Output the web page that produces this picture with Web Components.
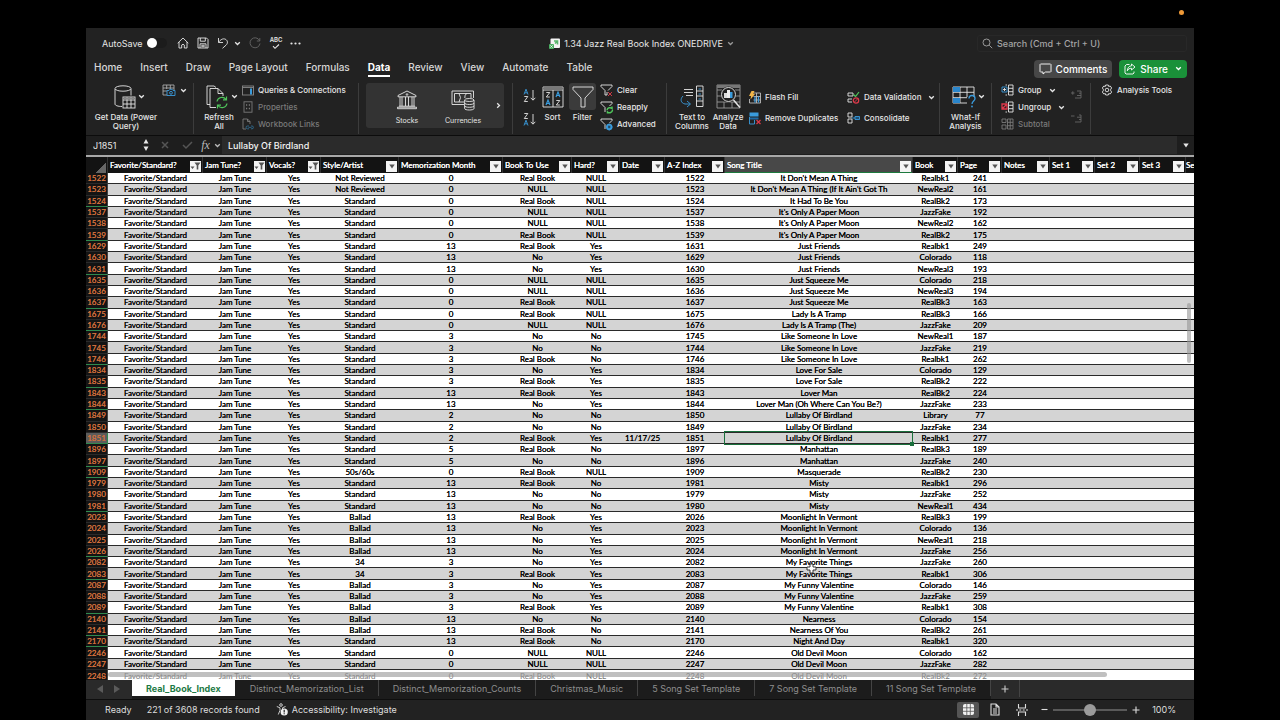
<!DOCTYPE html>
<html lang="en">
<head>
<meta charset="utf-8">
<title>1.34 Jazz Real Book Index ONEDRIVE</title>
<style>
  html, body { height: 100%; }
  body { margin: 0; background: #000; color: #e6e6e6; font-family: Inter, "Liberation Sans", sans-serif; }
</style>
</head>
<body>
<desktop-screen>
  <workbook-window></workbook-window>
</desktop-screen>

<script>
const BASE = `
  * { box-sizing: border-box; }
  button { font: inherit; color: inherit; background: none; border: 0; padding: 0; margin: 0; display: inline-flex; align-items: center; white-space: nowrap; }
  input { font: inherit; color: inherit; background: none; border: 0; padding: 0; margin: 0; min-width: 0; outline: 0; }
`;
function define(name, css, html, setup) {
  const template = document.createElement('template');
  template.innerHTML = `<style>${BASE}${css}</style>${html}`;
  customElements.define(name, class extends HTMLElement {
    connectedCallback() {
      if (this.shadowRoot) return;
      const root = this.attachShadow({ mode: 'open' });
      root.append(template.content.cloneNode(true));
      if (setup) setup.call(this, root);
    }
  });
}

/* Icons: [width, height, markup]; strokes inherit the text colour. */
const ICONS = {
  down: [7, 5, '<path d="M1.2 1.2 3.5 3.5 5.8 1.2" stroke-width="1.3"/>'],
  right: [5, 7, '<path d="M1.2 1.2 3.5 3.5 1.2 5.8" stroke-width="1.3"/>'],
  home: [12, 12, '<path d="M.7 6.200 6 1l5.300 5.200M2 5v6h2.700V8q1.300-1.600 2.600 0V11H10V5"/>'],
  save: [12, 12, '<path d="M1 1h8.500L11 2.500V11H1zM3.300 1v3.200h5V1M3 11V6.800h6V11M4.300 8.300h3.400M4.300 9.700h3.400"/>'],
  undo: [12, 12, '<path d="M1.500 1v4.500H6M1.700 5.300C3.500 2.500 6 1.200 8.300 2.200c2.700 1.300 2.700 4.200.7 6L5.500 11.300"/>'],
  redo: [12, 12, '<path d="M10.500 3.500A5 5 0 1 0 11 6.500M10.800 1v3H7.800"/>'],
  check: [8, 5, '<path d="M1 2.200 3 4.300 7 .5" stroke-width="1.100"/>'],
  dots: [11, 3, '<g fill="currentColor" stroke="none"><circle cx="1.500" cy="1.500" r="1.100"/><circle cx="5.500" cy="1.500" r="1.100"/><circle cx="9.500" cy="1.500" r="1.100"/></g>'],
  workbook: [11, 11, '<rect x="1.500" y=".5" width="9.500" height="9.500" rx="1" fill="#f4f4f4" stroke="none"/><path d="M5 3h3.500v3.500M8.500 3 6 5.500" stroke="#58b56b" stroke-width="1.600"/><rect x="0" y="6" width="5" height="5" rx="1" fill="#4caf63" stroke="none"/><path d="m1.300 7.300 2.400 2.400m0-2.400L1.300 9.700" stroke="#fff" stroke-width=".7"/>'],
  search: [11, 11, '<circle cx="4.500" cy="4.500" r="3.500"/><path d="m7.200 7.200 3 3"/>'],
  comment: [13, 12, '<path d="M1.500 1h10l.5.500v7l-.5.500H6.500L4 11V9H1.500L1 8.500v-7z"/>'],
  share: [12, 12, '<path d="M5.500 1.500H2.500L1 3v7l1 1h7l1-1V8.500M7.500 1 11 4 7.500 7V5.300C5.500 5.200 4.300 6 3.300 7.800 3.500 4.800 5 3 7.500 2.800z"/>'],
  getdata: [22, 24, '<path d="M1 4v15c0 1.500 3 2.500 7 2.500M17 4v6.500"/><ellipse cx="9" cy="3.500" rx="8" ry="2.700"/><rect x="9" y="12" width="12" height="11" fill="#222"/><path d="M9 15h12M9 19h12M13 12v11M17 12v11"/><path d="M9.500 13.500h11" stroke="#888" stroke-width="2"/>'],
  picture: [14, 12, '<path d="M1 1h11v5M1 1v10h4M1 4h11M1 7h4M4.700 1v4M8.300 1v4" stroke="#aaa"/><path d="M5 6.500h2l.8-1.200h2.400l.8 1.200h2v5H5z" fill="#222" stroke="#3a9bdc"/><circle cx="9" cy="8.800" r="1.400" stroke="#3a9bdc"/>'],
  refresh: [23, 24, '<path d="M4 19.500H1V1h7l2 1.500M10 22.500H4V3.500h8l5 5V11M12 3.500v5h5"/><path d="M11 16.500a5 5 0 0 1 9-2M20.500 11.500v3.300H17M21 18.500a5 5 0 0 1-9 2M11.500 23.500v-3.300H15" stroke="#4fc55b" stroke-width="1.200"/>'],
  queries: [12, 11, '<rect x=".5" y="1" width="11" height="9" stroke="#888"/><path d="M.5 2.500h11" stroke="#888"/><path d="M9 3.500v6" stroke="#3a9bdc" stroke-width="2"/>'],
  props: [10, 12, '<rect x="1" y=".8" width="8" height="10.400"/><path d="M3 4h1.200M5.800 4H7M3 7.500h1.200M5.800 7.500H7" stroke-width="1.300"/>'],
  links: [12, 12, '<path d="M4 11H1V1h4.500L8 3.500V6M5.500 1v2.500H8"/><path d="M7 8H5.500a1.400 1.400 0 0 0 0 2.800H7M9 8h1a1.400 1.400 0 0 1 0 2.800H9M6.500 9.400h3" stroke="#2f6c92"/>'],
  bank: [22, 20, '<path d="M11 1 2 5.500v1.300h18V5.500zM3 16.200h16M1.500 18.700h19M1.500 18.700v-1.500h19v1.500M4 7v9M6 7v9M9.500 7v9M12.500 7v9M16 7v9M18 7v9"/><circle cx="11" cy="4.500" r=".8"/>'],
  money: [24, 22, '<path d="M13 15.500H1V2h21.500v7M13 13H3.500V4.500H20V9"/><path d="M8 4.500q3 4 0 8.500M15.500 4.500q-2 2-1.700 4.500"/><rect x="13.500" y="10" width="9.500" height="10.500" fill="#333" stroke="none"/><ellipse cx="18.300" cy="11" rx="4.700" ry="1.500" fill="#333"/><path d="M13.600 11v8.500c0 2 9.400 2 9.400 0V11M13.600 14c0 2 9.400 2 9.400 0M13.600 16.800c0 2 9.400 2 9.400 0"/>'],
  az: [13, 15, '<path d="M1 6.500 3 1.200 5 6.500M1.700 4.800h2.600" stroke="#3a9bdc"/><path d="M1.300 8.500h3.500L1.300 13.500h3.500M10 2v10M7.700 9.800 10 12.200l2.300-2.400"/>'],
  za: [13, 15, '<path d="M1.300 1.500h3.500L1.300 6.500h3.500M10 2v10M7.700 9.800 10 12.200l2.300-2.400"/><path d="M1 13.500 3 8.200l2 5.300M1.700 11.800h2.600" stroke="#3a9bdc"/>'],
  sort: [22, 22, '<path d="M1 1h20v20H1zM1 4h20M11 4v17"/><path d="M1 2.500h20" stroke="#777" stroke-width="2"/><path d="M4.300 6.500h3.500L4.300 11h3.500M14.300 14.500h3.500L14.300 19h3.500"/><path d="m4 19 2-5 2 5M4.700 17.500h2.600M14 11l2-5 2 5M14.700 9.500h2.600" stroke="#3a9bdc" stroke-width="1.200"/>'],
  funnel: [22, 22, '<path d="M1 1h20v2.500L13 12v9H9v-9L1 3.500z"/>'],
  fclear: [13, 13, '<path d="M1 1h11v1.500L8 6.500M1 1v1.500l4 4V11h2V8"/><path d="m8 8 4 4m0-4-4 4" stroke="#e0394a"/>'],
  freapply: [13, 13, '<path d="M1 1h11v1.500L9.500 5M1 1v1.500l4 4V11"/><path d="M7 9a3 3 0 0 1 5-1.500V5.500M12.500 9a3 3 0 0 1-5 2v1.500" stroke="#4fc55b" stroke-width="1.500"/>'],
  fadvanced: [13, 13, '<path d="M1 1h11v1.500L9.500 5M1 1v1.500l4 4V11"/><circle cx="9.200" cy="9" r="2.300" stroke="#3a9bdc" stroke-width="1.800"/><path d="M9.200 5.500v7M5.700 9h7" stroke="#3a9bdc"/><circle cx="9.200" cy="9" r=".8" fill="#222" stroke="none"/>'],
  textcols: [24, 23, '<path d="M4 4.500h9M4 7.500h9M6 10.500h7"/><path d="M16.500 1h6.500v20.500h-6.500zM16.500 6h6.500M16.500 11h6.500M16.500 16h6.500"/><path d="M18.500 4h2.500M18.500 9h2.500M18.500 14h2.500" stroke="#3a9bdc"/><path d="M3 11c-3 3-2.500 7 2 8h5M7 16l3.500 3L7 22" stroke="#3a9bdc"/>'],
  analyze: [25, 25, '<path d="M1 1h23v23H1zM1 6h5M1 12h4M1 18h23M8 18v6M16 18v6M19 6h5M20 12h4" stroke="#999"/><path d="M1 2.500h23" stroke="#777" stroke-width="3"/><circle cx="12.500" cy="10.500" r="8" fill="#222" stroke="none"/><circle cx="12.500" cy="10.500" r="7"/><path d="m17.500 16 6.500 7.500" stroke-width="1.500"/><rect x="8" y="9" width="3" height="5" fill="#ddd" stroke="none"/><rect x="11" y="6" width="3" height="8" fill="#eee" stroke="none"/><rect x="14" y="8" width="2.500" height="6" fill="#3a9bdc" stroke="none"/>'],
  flash: [14, 13, '<path d="M5.500 2h7v10H1.500V8M5.500 5.500h7M5.500 9h7M8.500 2v10" stroke="#bbb"/><path d="M7 5.500v6M10.500 5.500v6" stroke="#3a9bdc" stroke-width="1.300"/><path d="M3.500 0h3L5.300 3H7L2.500 8.500 3 5H1z" fill="#f0b548" stroke="none"/>'],
  dupes: [14, 13, '<rect x="1.500" y=".5" width="9" height="4" fill="#3a9bdc" stroke="none"/><rect x="1.500" y="5.500" width="9" height="2" fill="#1e6aa5" stroke="none"/><path d="M1.500 5v7h5V8" stroke="#3a9bdc"/><path d="m8.500 8 4 4m0-4-4 4" stroke="#e0394a" stroke-width="1.200"/>'],
  validate: [13, 13, '<path d="M1 2h5v3H1zM5 8H1v3h4"/><path d="m6.500 3.500 2 2L12 1" stroke="#4fc55b" stroke-width="1.200"/><circle cx="9" cy="9.500" r="2.700" stroke="#e0394a" stroke-width="1.200"/><path d="m7.200 11.300 3.600-3.600" stroke="#e0394a"/>'],
  consolidate: [13, 12, '<path d="M1 1h4v4H1zM1 7h4v4H1z"/><path d="M8 4.500h4.500v3H8z" stroke="#3a9bdc" fill="#1e4d70"/><path d="M5 6h3" stroke="#3a9bdc"/>'],
  whatif: [24, 22, '<path d="M1 1h21v10M1 1v16h14M1 6.300h21M1 11.700h14M8 1v16M15 1v10"/><rect x="1" y="1" width="7" height="5" fill="#2a86cc" stroke="none"/><rect x="1" y="12" width="7" height="5" fill="#2a86cc" stroke="none"/><path d="M17 12.500c0-4 6-4 6 0 0 2.500-3 2.500-3 5.500" stroke="#3a9bdc" stroke-width="1.300"/><circle cx="20" cy="20.500" r=".9" fill="#3a9bdc" stroke="none"/>'],
  group: [13, 12, '<path d="M7.500 1H12v10H7.500zM7.500 4.300H12M7.500 7.700H12M6 1H4.500M6 11H4.500"/><path d="M1 3h5v5H1z" stroke="#3a9bdc"/><path d="M3.500 4v3M2 5.500h3"/>'],
  ungroup: [13, 12, '<path d="M7.500 1H12v10H7.500zM7.500 4.300H12M7.500 7.700H12M6 1H4.500M6 11H4.500"/><path d="M1 3h5v5H1zM1 8l5-5" stroke="#e0394a" stroke-width="1.300"/>'],
  subtotal: [13, 12, '<path d="M1 1h4v3.500H1zM1 7h4v4H1zM6.500 1H12v10H6.500zM6.500 4.300H12M6.500 7.700H12M9.200 1v10"/>'],
  plusrows: [12, 9, '<path d="M1 3h3.500M2.800 1.300v3.400M7 1h4M9 3.200h2M7 5.500h4M5 8h6M11 1v7"/>'],
  minusrows: [12, 9, '<path d="M1 2h3.500M9 1h2M7 3.200h4M9 5.500h2M5 8h6M11 1v7"/>'],
  gear: [12, 12, '<path d="M4.700 1h2.600l.4 1.500 1.500-.5 1.500 2-1 1.200v1.600l1 1.200-1.500 2-1.500-.5-.4 1.500H4.700l-.4-1.500-1.500.5-1.500-2 1-1.200V5.200l-1-1.200 1.500-2 1.500.5z"/><circle cx="6" cy="6" r="1.800"/>'],
  cross: [8, 8, '<path d="m1 1 6 6m0-6L1 7" stroke-width="1.500"/>'],
  tick: [11, 8, '<path d="m1 4 3 3 6-6" stroke-width="1.500"/>'],
  spin: [6, 14, '<path d="M3 1 5.500 5.500h-5zM3 13 .5 8.500h5z" fill="currentColor" stroke="none"/>'],
  caret: [6, 5, '<path d="M.3.5h5.400L3 4.500z" fill="currentColor" stroke="none"/>'],
  filtered: [11, 10, '<path d="M.5 5.500h4L2.500 8zM4.500 1.500h6L8.300 4.500V8.500H6.700v-4z" fill="currentColor" stroke="none"/>'],
  prev: [6, 8, '<path d="M6 0v8L0 4z" fill="currentColor" stroke="none"/>'],
  next: [6, 8, '<path d="M0 0v8l6-4z" fill="currentColor" stroke="none"/>'],
  plus: [8, 8, '<path d="M4 .5v7M.5 4h7" stroke-width="1.100"/>'],
  minus: [7, 7, '<path d="M.5 3.500h6" stroke-width="1.100"/>'],
  access: [12, 13, '<circle cx="5" cy="2" r="1.300"/><path d="M.8 3.500 4 4.800v2.500L2.300 11.500M9.500 3.500 6.500 4.800v1.500"/><circle cx="8.200" cy="9" r="3.600" fill="#f2f2f2" stroke="none"/><path d="M8.200 6.800v2.700M8.200 10.300v1" stroke="#222" stroke-width="1.200"/>'],
  gridview: [11, 11, '<rect width="11" height="11" rx="2" fill="#f2f2f2" stroke="none"/><path d="M0 3.800h11M0 7.300h11M3.800 0v11M7.300 0v11" stroke="#555" stroke-width=".8"/>'],
  pageview: [10, 13, '<path d="M1 1h5l3 3v8H1zM6 1v3h3M3 6h4M3 8h4M3 10h4" stroke-width="1.100"/>'],
  breakview: [12, 12, '<path d="M2.500 0v4h7V0M2.500 12V8h7v4M0 6h2M3.300 6h2M6.700 6h2M10 6h2" stroke-width="1.100"/>'],
  pointer: [11, 11, '<path d="M4 1h3v3h3v3H7v3H4V7H1V4h3z" fill="#fff" stroke="#222"/>'],
};
customElements.define('ui-icon', class extends HTMLElement {
  connectedCallback() {
    if (this.shadowRoot) return;
    const [w, h, body] = ICONS[this.getAttribute('name')];
    this.attachShadow({ mode: 'open' }).innerHTML = `<style>:host{display:inline-flex;flex:none}svg{display:block;overflow:visible}</style>
      <svg width="${w}" height="${h}" viewBox="0 0 ${w} ${h}" fill="none" stroke="currentColor" stroke-width=".9" aria-hidden="true">${body}</svg>`;
  }
});

/* Screen with the camera indicator above the window. */
define('desktop-screen', `
  :host { display: grid; grid-template-rows: 28px minmax(0, 1fr); height: 100vh; padding: 0 86px; }
  .menu { display: flex; justify-content: flex-end; padding: 10px 10px 0; }
  .dot { width: 5px; height: 5px; border-radius: 50%; background: #f09a37; }
`, `<div class="menu"><span class="dot"></span></div><slot></slot>`);

define('workbook-window', `
  :host { display: flex; flex-direction: column; min-height: 0; background: #222; overflow: hidden; }
  data-sheet { flex: 1; min-height: 0; }
`, `<title-bar></title-bar><ribbon-tabs></ribbon-tabs><ribbon-panel></ribbon-panel><formula-bar></formula-bar>
    <data-sheet></data-sheet><sheet-tabs></sheet-tabs><status-bar></status-bar>`);

define('title-bar', `
  :host { display: grid; grid-template-columns: 1fr auto 1fr; align-items: center; height: 28px; padding: 2px 7px 0 16px; font-size: 9px; }
  .left { display: flex; align-items: center; gap: 8px; }
  .left label { display: flex; align-items: center; gap: 4px; }
  .switch { appearance: none; width: 20px; height: 10px; border-radius: 5px; background: #1c1c1c; margin-right: 2px; }
  .switch::before { content: ""; display: block; width: 10px; height: 10px; border-radius: 50%; background: #fff; }
  .abc { flex-direction: column; font-size: 6px; line-height: 6px; font-weight: 600; gap: 1px; margin-left: 1px; }
  .undo { gap: 5px; }
  .off { color: #666; }
  .title { gap: 4px; margin-right: 6px; }
  .title ui-icon:last-child { color: #999; }
  .search { display: flex; align-items: center; justify-self: end; gap: 4px; width: 210px; height: 17px; padding: 0 4px; border: 1px solid #282828; border-radius: 3px; color: #a5a5a5; }
  .search input { flex: 1; font-weight: 500; }
  .search input::placeholder { color: #a5a5a5; opacity: 1; }
`, `<div class="left">
    <label>AutoSave <input class="switch" type="checkbox" role="switch"></label>
    <button aria-label="Home"><ui-icon name="home"></ui-icon></button>
    <button aria-label="Save"><ui-icon name="save"></ui-icon></button>
    <button class="undo" aria-label="Undo"><ui-icon name="undo"></ui-icon><ui-icon name="down"></ui-icon></button>
    <button class="off" aria-label="Redo"><ui-icon name="redo"></ui-icon></button>
    <button class="abc">ABC<ui-icon name="check"></ui-icon></button>
    <button aria-label="More"><ui-icon name="dots"></ui-icon></button>
  </div>
  <button class="title"><ui-icon name="workbook"></ui-icon>1.34 Jazz Real Book Index ONEDRIVE<ui-icon name="down"></ui-icon></button>
  <label class="search"><ui-icon name="search"></ui-icon><input type="search" placeholder="Search (Cmd + Ctrl + U)" aria-label="Search"></label>`);

define('ribbon-tabs', `
  :host { display: flex; align-items: center; height: 24px; padding: 0 7px 0 8px; font-size: 10px; font-weight: 500; color: #d6d6d6; }
  nav { display: flex; gap: 18px; margin-right: auto; }
  nav a { color: inherit; text-decoration: none; line-height: 15px; border-bottom: 2px solid transparent; }
  nav a[aria-current] { color: #fff; font-weight: 700; border-color: #fff; }
  button { height: 18px; border-radius: 4px; color: #fff; padding: 0 5px; gap: 4px; margin-top: 1px; }
  .comments { background: #474747; }
  .share { background: #1a9139; margin-left: 7px; }
  .share ui-icon:last-child { margin-left: 3px; }
`, `<nav><a href="#">Home</a><a href="#">Insert</a><a href="#">Draw</a><a href="#">Page Layout</a><a href="#">Formulas</a><a href="#" aria-current="page">Data</a><a href="#">Review</a><a href="#">View</a><a href="#">Automate</a><a href="#">Table</a></nav>
  <button class="comments"><ui-icon name="comment"></ui-icon>Comments</button>
  <button class="share"><ui-icon name="share"></ui-icon>Share<ui-icon name="down"></ui-icon></button>`);

/* Tall button: icon above a centred label; "menu" adds a chevron. */
define('tall-button', `
  :host { display: block; }
  button { flex-direction: column; width: 100%; text-align: center; line-height: 9px; white-space: pre-line; }
  .icon { display: flex; align-items: center; justify-content: center; height: 27px; gap: 2px; margin-bottom: 3px; }
  :host([menu]) .icon { padding-left: 6px; }
  :host([pressed]) .icon { background: #3b3b3b; border-radius: 3px; width: 27px; }
`, `<button><span class="icon"></span><slot></slot></button>`, function (root) {
  root.querySelector('.icon').innerHTML = `<ui-icon name="${this.getAttribute('icon')}"></ui-icon>` +
    (this.hasAttribute('menu') ? '<ui-icon name="down"></ui-icon>' : '');
});

/* One-line button: icon, label and an optional chevron. */
define('line-button', `
  :host { display: block; }
  button { gap: 4px; height: 14px; line-height: 14px; }
  .icon { display: flex; justify-content: center; width: 13px; }
  .more { margin-left: 3px; }
  :host([disabled]) button { color: #7a7a7a; }
`, `<button><span class="icon"></span><slot></slot></button>`, function (root) {
  root.querySelector('.icon').innerHTML = `<ui-icon name="${this.getAttribute('icon')}"></ui-icon>`;
  if (this.hasAttribute('menu')) root.querySelector('button').insertAdjacentHTML('beforeend', '<ui-icon class="more" name="down"></ui-icon>');
  if (this.hasAttribute('disabled')) root.querySelector('button').disabled = true;
});

define('ribbon-panel', `
  :host { display: grid; grid-template-columns: 108px 165px 154px 154px 273px 52px 99px 1fr; height: 56px; padding-top: 3px; border-bottom: 1px solid #0c0c0c; font-size: 8px; font-weight: 500; }
  .group { display: flex; align-items: flex-start; border-right: 1px solid #3c3c3c; margin-bottom: 4px; min-width: 0; }
  .group:last-child { border: 0; padding-left: 9px; }
  .list { display: grid; grid-auto-rows: 17px; }
  .pairs { display: grid; grid-template-columns: 99px auto; grid-auto-rows: 21px; padding: 7px 0 0 2px; }
  .gallery { display: flex; flex: 1; background: #333; border-radius: 3px; margin: 0 8px 0 7px; height: 45px; align-items: center; font-size: 7px; font-weight: 400; }
  .gallery tall-button { width: 56px; }
  .gallery tall-button:first-child { margin-left: 13px; }
  .gallery > button { margin-left: 5px; }
  .stack { display: grid; gap: 9px; padding: 5px 0 0 10px; }
  .dim { color: #666; padding: 7px 0 0 5px; gap: 15px; display: grid; }
  .get { width: 76px; margin-left: 2px; }
  .tables { gap: 4px; margin-top: 1px; margin-left: -2px; }
  .refresh { width: 40px; margin-left: 5px; }
  .refresh + .list { padding: 0 0 0 2px; }
  .sort { width: 33px; }
  .filter { width: 27px; }
  .filter + .list { padding-left: 4px; }
  .columns { width: 36px; margin-left: 7px; }
  .analyze { width: 36px; }
  .whatif { width: 51px; }
  .outline { padding-left: 9px; }
`, `<div class="group">
    <tall-button class="get" icon="getdata" menu>Get Data (Power
Query)</tall-button>
    <button class="tables" aria-label="Data from picture"><ui-icon name="picture"></ui-icon><ui-icon name="down"></ui-icon></button>
  </div>
  <div class="group">
    <tall-button class="refresh" icon="refresh" menu>Refresh
All</tall-button>
    <div class="list"><line-button icon="queries">Queries &amp; Connections</line-button><line-button icon="props" disabled>Properties</line-button><line-button icon="links" disabled>Workbook Links</line-button></div>
  </div>
  <div class="group"><div class="gallery">
    <tall-button icon="bank">Stocks</tall-button><tall-button icon="money">Currencies</tall-button>
    <button aria-label="More data types"><ui-icon name="right"></ui-icon></button>
  </div></div>
  <div class="group">
    <div class="stack"><button aria-label="Sort ascending"><ui-icon name="az"></ui-icon></button><button aria-label="Sort descending"><ui-icon name="za"></ui-icon></button></div>
    <tall-button class="sort" icon="sort">Sort</tall-button>
    <tall-button class="filter" icon="funnel" pressed>Filter</tall-button>
    <div class="list"><line-button icon="fclear">Clear</line-button><line-button icon="freapply">Reapply</line-button><line-button icon="fadvanced">Advanced</line-button></div>
  </div>
  <div class="group">
    <tall-button class="columns" icon="textcols">Text to
Columns</tall-button>
    <tall-button class="analyze" icon="analyze">Analyze
Data</tall-button>
    <div class="pairs"><line-button icon="flash">Flash Fill</line-button><line-button icon="validate" menu>Data Validation</line-button><line-button icon="dupes">Remove Duplicates</line-button><line-button icon="consolidate">Consolidate</line-button></div>
  </div>
  <div class="group"><tall-button class="whatif" icon="whatif" menu>What-If
Analysis</tall-button></div>
  <div class="group">
    <div class="list outline"><line-button icon="group" menu>Group</line-button><line-button icon="ungroup" menu>Ungroup</line-button><line-button icon="subtotal" disabled>Subtotal</line-button></div>
    <div class="dim"><ui-icon name="plusrows"></ui-icon><ui-icon name="minusrows"></ui-icon></div>
  </div>
  <div class="group"><line-button icon="gear">Analysis Tools</line-button></div>`);

define('formula-bar', `
  :host { display: flex; align-items: center; height: 21px; padding-bottom: 1px; font-size: 9px; font-weight: 500; background: #1e1e1e; border-bottom: 2px solid #a8a8a8; }
  .name { width: 50px; padding-left: 7px; font-weight: 400; }
  button { justify-content: center; }
  .step { width: 20px; } .no { width: 18px; color: #555; } .yes { width: 26px; color: #555; }
  .fx { width: 22px; gap: 4px; font: italic 12px "Liberation Serif", serif; color: #bbb; }
  .value { flex: 1; height: 18px; padding-left: 6px; background: #2b2b2b; color: #f4f4f4; }
  .open { width: 17px; height: 16px; background: #1e1e1e; }
`, `<input class="name" value="J1851" aria-label="Name box">
  <button class="step" aria-label="Choose cell"><ui-icon name="spin"></ui-icon></button>
  <button class="no" aria-label="Cancel"><ui-icon name="cross"></ui-icon></button>
  <button class="yes" aria-label="Enter"><ui-icon name="tick"></ui-icon></button>
  <button class="fx">fx<ui-icon name="down"></ui-icon></button>
  <input class="value" value="Lullaby Of Birdland" aria-label="Formula">
  <button class="open" aria-label="Expand formula bar"><ui-icon name="caret"></ui-icon></button>`);

const COLUMNS = [['Favorite/Standard?', 95, 1], ['Jam Tune?', 64, 1], ['Vocals?', 54, 1], ['Style/Artist', 78], ['Memorization Month', 104], ['Book To Use', 69],
  ['Hard?', 48], ['Date', 45], ['A-Z Index', 60], ['Song Title', 188], ['Book', 45], ['Page', 44], ['Notes', 48], ['Set 1', 45], ['Set 2', 45], ['Set 3', 46], ['Se', 0]];
/* row | style | month | book to use | hard | A-Z index | title | book | page | date */
const ROWS = `1522|Not Reviewed|0|Real Book|NULL|1522|It Don't Mean A Thing|Realbk1|241
1523|Not Reviewed|0|NULL|NULL|1523|It Don't Mean A Thing (If It Ain't Got Th|NewReal2|161
1524|Standard|0|Real Book|NULL|1524|It Had To Be You|RealBk2|173
1537|Standard|0|NULL|NULL|1537|It's Only A Paper Moon|JazzFake|192
1538|Standard|0|NULL|NULL|1538|It's Only A Paper Moon|NewReal2|162
1539|Standard|0|Real Book|NULL|1539|It's Only A Paper Moon|RealBk2|175
1629|Standard|13|Real Book|Yes|1631|Just Friends|Realbk1|249
1630|Standard|13|No|Yes|1629|Just Friends|Colorado|118
1631|Standard|13|No|Yes|1630|Just Friends|NewReal3|193
1635|Standard|0|NULL|NULL|1635|Just Squeeze Me|Colorado|218
1636|Standard|0|NULL|NULL|1636|Just Squeeze Me|NewReal3|194
1637|Standard|0|Real Book|NULL|1637|Just Squeeze Me|RealBk3|163
1675|Standard|0|Real Book|NULL|1675|Lady Is A Tramp|RealBk3|166
1676|Standard|0|NULL|NULL|1676|Lady Is A Tramp (The)|JazzFake|209
1744|Standard|3|No|No|1745|Like Someone In Love|NewReal1|187
1745|Standard|3|No|No|1744|Like Someone In Love|JazzFake|219
1746|Standard|3|Real Book|No|1746|Like Someone In Love|Realbk1|262
1834|Standard|3|No|Yes|1834|Love For Sale|Colorado|129
1835|Standard|3|Real Book|Yes|1835|Love For Sale|RealBk2|222
1843|Standard|13|Real Book|Yes|1843|Lover Man|RealBk2|224
1844|Standard|13|No|Yes|1844|Lover Man (Oh Where Can You Be?)|JazzFake|233
1849|Standard|2|No|No|1850|Lullaby Of Birdland|Library|77
1850|Standard|2|No|No|1849|Lullaby Of Birdland|JazzFake|234
1851|Standard|2|Real Book|Yes|1851|Lullaby Of Birdland|Realbk1|277|11/17/25
1896|Standard|5|Real Book|No|1897|Manhattan|RealBk3|189
1897|Standard|5|No|No|1896|Manhattan|JazzFake|240
1909|50s/60s|0|Real Book|NULL|1909|Masquerade|RealBk2|230
1979|Standard|13|Real Book|No|1981|Misty|Realbk1|296
1980|Standard|13|No|No|1979|Misty|JazzFake|252
1981|Standard|13|No|No|1980|Misty|NewReal1|434
2023|Ballad|13|Real Book|Yes|2026|Moonlight In Vermont|RealBk3|199
2024|Ballad|13|No|Yes|2023|Moonlight In Vermont|Colorado|136
2025|Ballad|13|No|Yes|2025|Moonlight In Vermont|NewReal1|218
2026|Ballad|13|No|Yes|2024|Moonlight In Vermont|JazzFake|256
2082|34|3|No|Yes|2082|My Favorite Things|JazzFake|260
2083|34|3|Real Book|Yes|2083|My Favorite Things|Realbk1|306
2087|Ballad|3|No|Yes|2087|My Funny Valentine|Colorado|146
2088|Ballad|3|No|Yes|2088|My Funny Valentine|JazzFake|259
2089|Ballad|3|Real Book|Yes|2089|My Funny Valentine|Realbk1|308
2140|Ballad|13|No|No|2140|Nearness|Colorado|154
2141|Ballad|13|Real Book|No|2141|Nearness Of You|RealBk2|261
2170|Standard|13|Real Book|No|2170|Night And Day|Realbk1|320
2246|Standard|0|NULL|NULL|2246|Old Devil Moon|Colorado|162
2247|Standard|0|NULL|NULL|2247|Old Devil Moon|JazzFake|282
2248|Standard|0|Real Book|NULL|2248|Old Devil Moon|RealBk2|272`.split('\n').map(r => r.split('|'));

define('data-sheet', `
  :host { display: block; position: relative; overflow: hidden; background: #fff; color: #000; font-family: Lato, "Liberation Sans", sans-serif; font-size: 8px; }
  table { width: 100%; height: calc(100% + 2px); table-layout: fixed; border-collapse: separate; border-spacing: 0; }
  th, td { padding: 0; font-weight: 400; white-space: nowrap; }
  thead th { height: 16px; background: #131313; color: #fff; border-right: 1px solid #333; text-align: left; text-shadow: 0 0 0 #fff; }
  thead th.active { background: #484848; box-shadow: inset 0 -1px #1d7a3e; }
  thead th div { display: flex; align-items: center; justify-content: space-between; padding: 0 1px 0 2px; height: 16px; line-height: 14px; }
  thead th:last-child { border: 0; }
  thead th:last-child div { padding: 0; }
  thead button { justify-content: center; width: 11px; height: 11px; margin-top: 2px; background: #f4f4f4; color: #555; flex: none; }
  .corner div { justify-content: flex-end; align-items: flex-end; }
  .corner i { width: 11px; height: 11px; background: linear-gradient(135deg, transparent 50%, #666 50%); }
  td, tbody th { line-height: 10px; text-align: center; border-bottom: 1px solid #2a2a2a; text-shadow: 0 0 0 #000; }
  tbody tr:nth-child(even) td { background: #d4d4d4; }
  tbody th { background: #141414; color: #d2703c; border-right: 1px solid #444; text-shadow: 0 0 0 #d2703c; }
  tbody th.gap { border-bottom-color: #2f8a4e; }
  tbody .current th { background: #5c5c5c; border-right-color: #2f8a4e; }
  tbody tr:last-child td { color: #777; text-shadow: none; border-bottom: 0; }
  .selected { position: relative; }
  .selected::before { content: ""; position: absolute; inset: -2px 0 -2px -1px; border: 1px solid #1a6f3c; }
  .selected::after { content: ""; position: absolute; right: -1px; bottom: -3px; width: 4px; height: 4px; background: #1a6f3c; }
  .bar { position: absolute; border-radius: 3px; background: rgba(150,150,150,.6); }
  .h { left: 2%; right: 87px; bottom: 3px; height: 5px; }
  .v { right: 3px; top: 28%; width: 4px; height: 60px; }
  .pointer { position: absolute; left: 720px; top: 406px; }
`, `<table><colgroup><col style="width:22px"></colgroup><thead><tr><th class="corner"><div><i></i></div></th></tr></thead><tbody></tbody></table>
   <span class="bar h"></span><span class="bar v"></span><ui-icon class="pointer" name="pointer"></ui-icon>`, function (root) {
  const cols = root.querySelector('colgroup'), head = root.querySelector('thead tr'), body = root.querySelector('tbody');
  for (const [label, width, filtered] of COLUMNS) {
    cols.insertAdjacentHTML('beforeend', `<col${width ? ` style="width:${width}px"` : ''}>`);
    head.insertAdjacentHTML('beforeend', `<th scope="col"${label === 'Song Title' ? ' class="active"' : ''}><div>${label}${width
      ? `<button aria-label="Filter ${label}"><ui-icon name="${filtered ? 'filtered' : 'caret'}"></ui-icon></button>` : ''}</div></th>`);
  }
  body.innerHTML = ROWS.map(([n, style, month, use, hard, index, title, book, page, date = ''], i) => {
    const next = ROWS[i + 1], current = n === '1851';
    const cells = ['Favorite/Standard', 'Jam Tune', 'Yes', style, month, use, hard, date, index, title, book, page, '', '', '', '', ''];
    return `<tr${current ? ' class="current"' : ''}><th scope="row"${next && +next[0] !== +n + 1 ? ' class="gap"' : ''}>${n}</th>` +
      cells.map((c, k) => `<td${current && k === 9 ? ' class="selected"' : ''}>${c}</td>`).join('') + '</tr>';
  }).join('');
});

define('sheet-tabs', `
  :host { display: flex; align-items: flex-start; height: 20px; background: #2a2a2a; border-bottom: 1px solid #0e0e0e; font-size: 9px; color: #8e8e8e; }
  .nav { display: flex; gap: 11px; padding: 5px 12px 0 11px; color: #5a5a5a; }
  nav { display: flex; background: #1c1c1c; height: 19px; }
  a { display: block; height: 16px; line-height: 17px; padding: 0 14px; border-right: 1px solid #444; color: inherit; text-decoration: none; white-space: nowrap; }
  a[aria-current] { margin-right: 1px; background: #fff; color: #1d7a45; font-weight: 700; border: 0; }
  .add { width: 29px; height: 17px; justify-content: center; border-right: 1px solid #444; color: #ccc; }
`, `<div class="nav"><button aria-label="Previous sheet"><ui-icon name="prev"></ui-icon></button><button aria-label="Next sheet"><ui-icon name="next"></ui-icon></button></div>
  <nav><a href="#" aria-current="page">Real_Book_Index</a><a href="#">Distinct_Memorization_List</a><a href="#">Distinct_Memorization_Counts</a><a href="#">Christmas_Music</a><a href="#">5 Song Set Template</a><a href="#">7 Song Set Template</a><a href="#">11 Song Set Template</a></nav>
  <button class="add" aria-label="Add sheet"><ui-icon name="plus"></ui-icon></button>`);

define('status-bar', `
  :host { display: flex; align-items: center; height: 20px; padding: 0 18px 1px 19px; font-size: 9px; color: #dedede; }
  .access { gap: 4px; margin-left: 16px; }
  .count { margin-left: 15px; }
  .views { display: flex; align-items: center; margin-left: auto; gap: 16px; }
  .views .on { width: 22px; height: 16px; justify-content: center; background: #555; border-radius: 2px; margin-right: -5px; }
  .zoom { display: flex; align-items: center; gap: 5px; margin: 0 12px 0 13px; }
  input { appearance: none; width: 74px; height: 12px; background: linear-gradient(#5a5a5a, #5a5a5a) center / 100% 2px no-repeat; }
  input::-webkit-slider-thumb { appearance: none; width: 12px; height: 12px; border-radius: 50%; background: #9b9b9b; }
`, `<span>Ready</span><span class="count">221 of 3608 records found</span>
  <button class="access"><ui-icon name="access"></ui-icon>Accessibility: Investigate</button>
  <div class="views"><button class="on" aria-label="Normal view"><ui-icon name="gridview"></ui-icon></button><button aria-label="Page layout view"><ui-icon name="pageview"></ui-icon></button><button aria-label="Page break preview"><ui-icon name="breakview"></ui-icon></button></div>
  <div class="zoom"><button aria-label="Zoom out"><ui-icon name="minus"></ui-icon></button><input type="range" min="0" max="200" value="100" aria-label="Zoom"><button aria-label="Zoom in"><ui-icon name="plus"></ui-icon></button></div>
  <span>100%</span>`);
</script>
</body>
</html>
